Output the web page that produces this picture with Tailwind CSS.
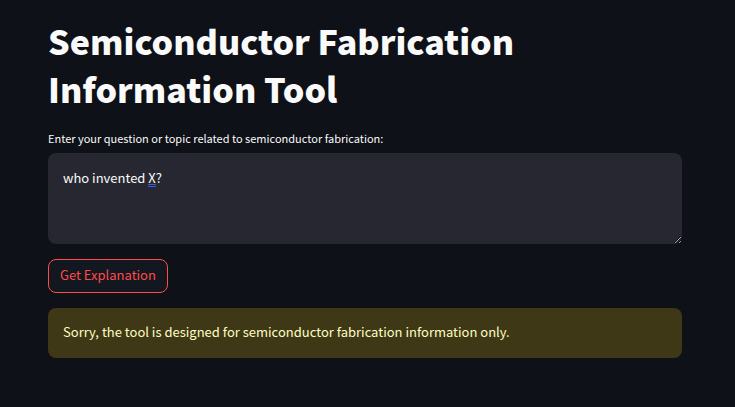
<!DOCTYPE html>
<html lang="en">
<head>
<meta charset="utf-8">
<meta name="viewport" content="width=device-width, initial-scale=1">
<title>Semiconductor Fabrication Information Tool</title>
<script src="https://cdn.jsdelivr.net/npm/@tailwindcss/browser@4"></script>
</head>
<body class="min-h-screen bg-[#0e1117] font-['Noto_Sans_CJK_SC','Noto_Sans',sans-serif] text-[#fafafa]">
<main class="mr-[53px] ml-12 flex flex-col items-stretch pt-[17px]">
  <h1 class="max-w-[520px] text-[34px] leading-12 font-black">Semiconductor Fabrication Information Tool</h1>
  <label for="question" class="mt-[15px] text-[11px] leading-5">Enter your question or topic related to semiconductor fabrication:</label>
  <div class="relative mt-[5px] flex">
    <textarea id="question" spellcheck="false" rows="3" class="h-[91px] w-full resize rounded-lg bg-[#262730] px-[15px] py-[15px] text-[13px] leading-5 outline-none">who invented X?</textarea>
    <!-- grammar hint under the last word -->
    <span aria-hidden="true" class="pointer-events-none absolute top-[31px] left-[100px] h-[3px] w-2 border-y border-[#3a5bdc]"></span>
  </div>
  <button type="button" class="mt-[15px] self-start rounded-lg border border-[#ff4b4b] bg-[#131720] px-[11px] pt-[5px] pb-[7px] text-[13px] leading-5 text-[#ff4b4b]">Get Explanation</button>
  <div role="alert" class="mt-[15px] rounded-lg bg-[#3e3816] px-[15px] pt-[14px] pb-4 text-[13px] leading-5 text-[#ffffc2]">Sorry, the tool is designed for semiconductor fabrication information only.</div>
</main>
</body>
</html>
